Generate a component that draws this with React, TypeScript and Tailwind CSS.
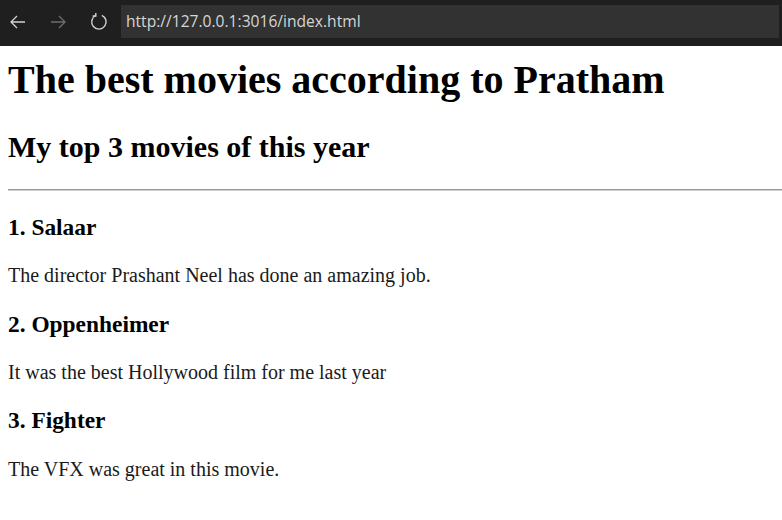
import React from 'react';

const movies = [
  { title: '1. Salaar', note: 'The director Prashant Neel has done an amazing job.' },
  { title: '2. Oppenheimer', note: 'It was the best Hollywood film for me last year' },
  { title: '3. Fighter', note: 'The VFX was great in this movie.' },
];

const BrowserBar = () => (
  <div className="flex h-[46px] items-start bg-[#1f1f1f] pt-[5px]">
    <div className="flex h-[33px] items-center">
      {/* back */}
      <svg width="18" height="18" viewBox="0 0 18 18" className="ml-[9px]" fill="none" stroke="#d4d4d4" strokeWidth="1.3">
        <path d="M16 9H2M8 3L2 9l6 6" />
      </svg>
      {/* forward, disabled */}
      <svg width="18" height="18" viewBox="0 0 18 18" className="ml-[22px]" fill="none" stroke="#6e6e6e" strokeWidth="1.3">
        <path d="M2 9h14M10 3l6 6-6 6" />
      </svg>
      {/* reload */}
      <svg width="18" height="18" viewBox="0 0 18 18" className="ml-[23px]" fill="none" stroke="#d4d4d4" strokeWidth="1.4">
        <path d="M11.8 2.3A7.2 7.2 0 1 1 5.6 2.5" />
        <path d="M5.8 -0.2v3.2H2.6" />
      </svg>
    </div>
    <div className="ml-[13px] mr-[3px] flex h-[33px] flex-1 items-center bg-[#323232] pl-[5px]">
      <span className="font-['Open_Sans',sans-serif] text-[15.6px] text-[#d6d6d6]">
        http://127.0.0.1:3016/index.html
      </span>
    </div>
  </div>
);

export default function App() {
  return (
    <div className="h-[520px] w-[782px] overflow-hidden bg-white">
      <BrowserBar />
      <div className="pl-2 font-['Liberation_Serif','Times_New_Roman',serif] text-[20px] leading-[1.15] text-black">
        <h1 className="mt-[11px] text-[40px] font-bold leading-[1.15]">The best movies according to Pratham</h1>
        <h2 className="mt-[27px] text-[30px] font-bold leading-[1.15]">My top 3 movies of this year</h2>
        <hr className="mt-[24px] mb-[1px] border-t border-b border-t-[#9a9a9a] border-b-[#cfcfcf]" />
        {movies.map((m) => (
          <section key={m.title}>
            <h3 className="mt-[23.4px] text-[23.4px] font-bold leading-[1.15]">{m.title}</h3>
            <p className="mt-[23.4px] leading-[1.15] text-[#1a1a1a]">{m.note}</p>
          </section>
        ))}
      </div>
    </div>
  );
}
